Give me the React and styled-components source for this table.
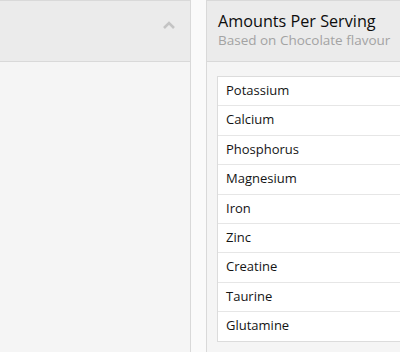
import React from "react";
import styled, { createGlobalStyle } from "styled-components";

const GlobalStyle = createGlobalStyle`
    html, body {
        margin: 0;
        padding: 0;
        background: #fafafa;
        overflow: hidden;
    }
    body {
        font-family: "Open Sans", Lato, sans-serif;
        color: #1c1c1c;
    }
`;

const nutrients = [
    "Potassium",
    "Calcium",
    "Phosphorus",
    "Magnesium",
    "Iron",
    "Zinc",
    "Creatine",
    "Taurine",
    "Glutamine",
];

const Chevron = () => (
    <svg width="14" height="10" viewBox="0 0 14 10">
        <path
            d="M2 8 L7 3 L12 8"
            fill="none"
            stroke="#c4c4c4"
            strokeWidth="2.6"
        />
    </svg>
);

const App = () => {
    return (
        <Page>
            <GlobalStyle />
            <Panel $width="191px">
                <Header>
                    <Toggle>
                        <Chevron />
                    </Toggle>
                </Header>
            </Panel>
            <Panel $width="220px" $left>
                <Header>
                    <Title>Amounts Per Serving</Title>
                    <Subtitle>Based on Chocolate flavour</Subtitle>
                </Header>
                <Body>
                    <Table>
                        {nutrients.map((n) => (
                            <Row key={n}>{n}</Row>
                        ))}
                    </Table>
                </Body>
            </Panel>
        </Page>
    );
};

const Page = styled.div`
    display: flex;
    gap: 15px;
    width: 400px;
    height: 352px;
    overflow: hidden;
`;

const Panel = styled.section`
    flex: 0 0 ${(p) => p.$width};
    box-sizing: border-box;
    height: 352px;
    display: flex;
    flex-direction: column;
    background: #f5f5f5;
    border-top: 1px solid #d9d9d9;
    border-right: ${(p) => (p.$left ? "none" : "1px solid #d9d9d9")};
    border-left: ${(p) => (p.$left ? "1px solid #d9d9d9" : "none")};
`;

const Header = styled.header`
    box-sizing: border-box;
    height: 61px;
    flex: 0 0 61px;
    background: #ebebeb;
    border-bottom: 1px solid #d9d9d9;
    padding: 9px 0 0 11px;
    display: flex;
    flex-direction: column;
`;

const Toggle = styled.div`
    align-self: flex-end;
    margin: 3px 14px 0 0;
`;

const Title = styled.h2`
    margin: 0;
    font-size: 16.2px;
    font-weight: 400;
    line-height: 22px;
    color: #0d0d0d;
    white-space: nowrap;
`;

const Subtitle = styled.div`
    font-size: 13.5px;
    line-height: 16px;
    color: #a3a3a3;
    white-space: nowrap;
`;

const Body = styled.div`
    padding: 14px 0 0 10px;
`;

const Table = styled.div`
    background: #fff;
    border: 1px solid #dcdcdc;
    border-right: none;
`;

const Row = styled.div`
    height: 28.4px;
    line-height: 27px;
    padding-left: 8px;
    font-size: 13px;
    color: #141414;
    border-top: 1px solid #e6e6e6;

    &:first-child {
        border-top: none;
    }
`;

export default App;
